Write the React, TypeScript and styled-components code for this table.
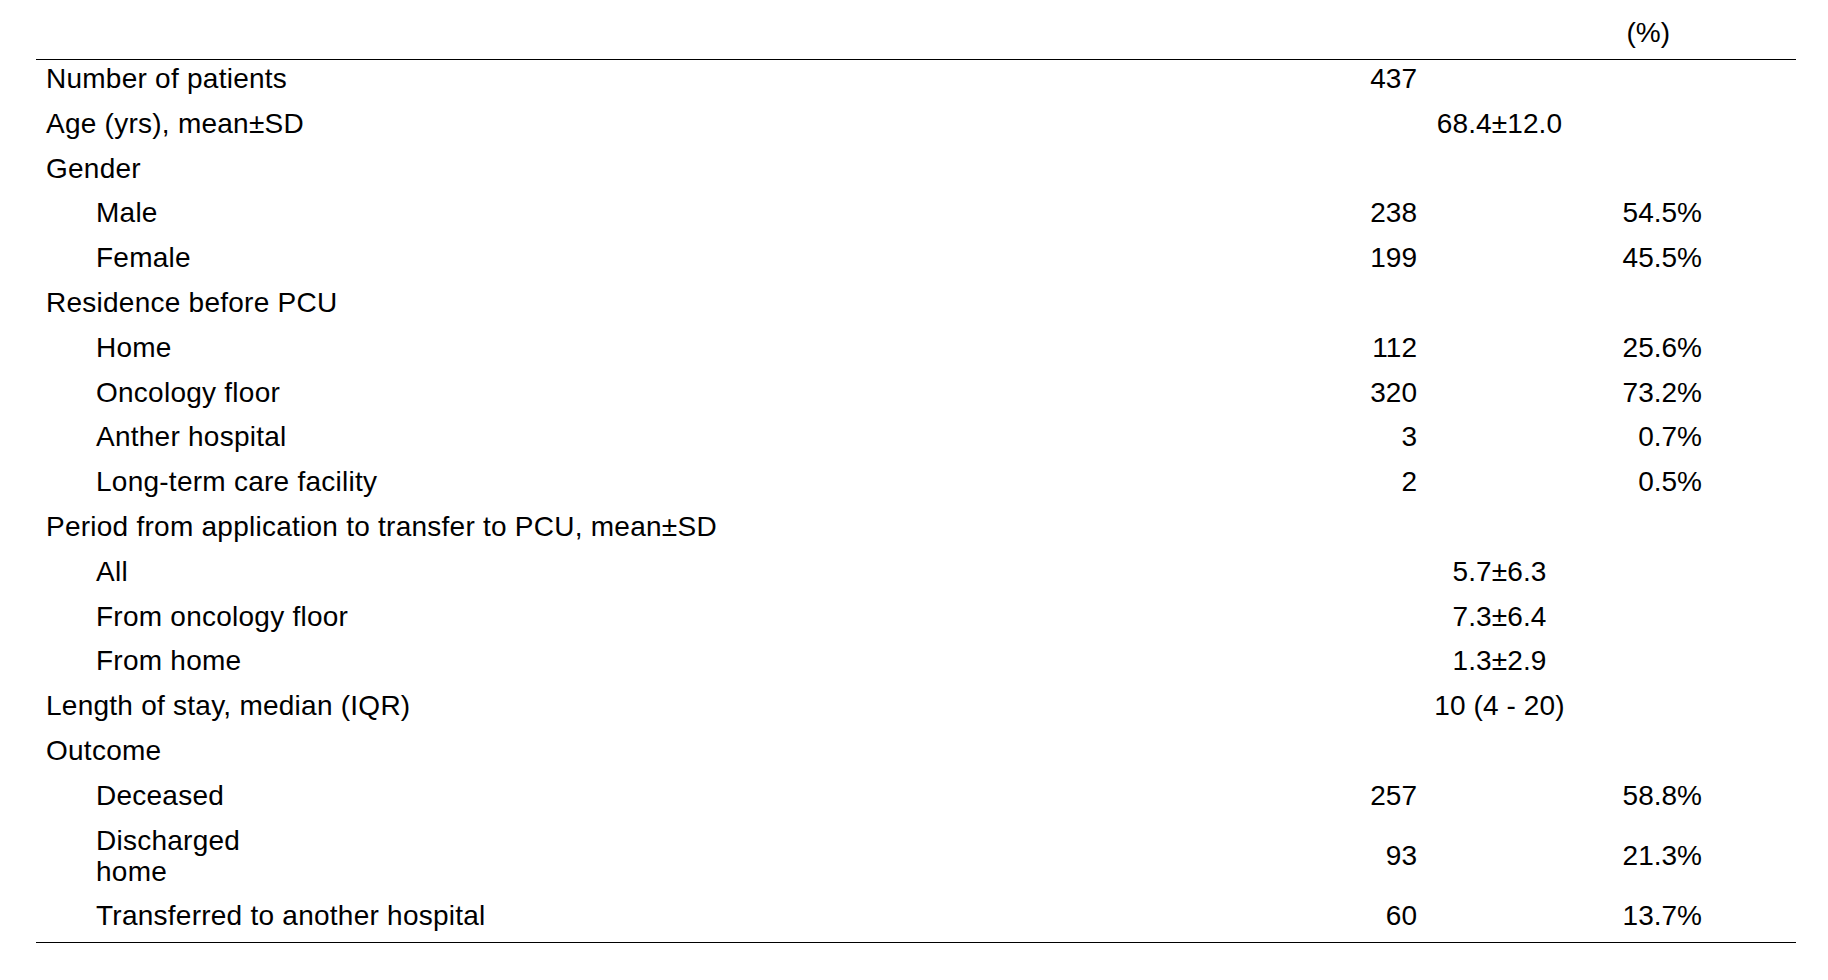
import React from "react";
import styled, { createGlobalStyle } from "styled-components";

const GlobalStyle = createGlobalStyle`
  html, body {
    margin: 0;
    padding: 0;
    background: #ffffff;
  }
  body {
    font-family: "Liberation Sans", Arial, Helvetica, sans-serif;
    color: #000000;
  }
`;

const Page = styled.div`
  width: 1828px;
  min-height: 980px;
  box-sizing: border-box;
  padding-left: 36px;
  background: #ffffff;
`;

const Table = styled.div`
  width: 1760px;
  display: flex;
  flex-direction: column;
  font-size: 28px;
  line-height: 31px;
  color: #000;
`;

const GRID = "1261px 120px 165px 120px 94px";

const HeaderRow = styled.div`
  display: grid;
  grid-template-columns: ${GRID};
  padding: 17px 0 11px;
  border-bottom: 1px solid #000;
`;

const HeadCell = styled.div`
  grid-column: 4;
  text-align: right;
  padding-right: 32px;
  white-space: nowrap;
`;

const Body = styled.div`
  display: flex;
  flex-direction: column;
  border-bottom: 1px solid #000;
`;

const Row = styled.div`
  display: grid;
  grid-template-columns: ${GRID};
  align-items: center;
  padding: 3px 0 10.8px;
`;

const LabelCell = styled.div<{ $sub?: boolean }>`
  grid-column: 1;
  padding-left: ${(p) => (p.$sub ? "60px" : "10px")};
  letter-spacing: 0.25px;
  white-space: nowrap;
`;

const CountCell = styled.div`
  grid-column: 2;
  text-align: right;
  white-space: nowrap;
`;

const StatCell = styled.div`
  grid-column: 3;
  text-align: center;
  letter-spacing: 0.1px;
  white-space: nowrap;
`;

const PctCell = styled.div`
  grid-column: 4;
  text-align: right;
  white-space: nowrap;
`;

type Item = {
  label: React.ReactNode;
  sub?: boolean;
  n?: string;
  stat?: string;
  pct?: string;
};

const rows: Item[] = [
  { label: "Number of patients", n: "437" },
  { label: "Age (yrs), mean±SD", stat: "68.4±12.0" },
  { label: "Gender" },
  { label: "Male", sub: true, n: "238", pct: "54.5%" },
  { label: "Female", sub: true, n: "199", pct: "45.5%" },
  { label: "Residence before PCU" },
  { label: "Home", sub: true, n: "112", pct: "25.6%" },
  { label: "Oncology floor", sub: true, n: "320", pct: "73.2%" },
  { label: "Anther hospital", sub: true, n: "3", pct: "0.7%" },
  { label: "Long-term care facility", sub: true, n: "2", pct: "0.5%" },
  { label: "Period from application to transfer to PCU, mean±SD" },
  { label: "All", sub: true, stat: "5.7±6.3" },
  { label: "From oncology floor", sub: true, stat: "7.3±6.4" },
  { label: "From home", sub: true, stat: "1.3±2.9" },
  { label: "Length of stay, median (IQR)", stat: "10 (4 - 20)" },
  { label: "Outcome" },
  { label: "Deceased", sub: true, n: "257", pct: "58.8%" },
  {
    label: (
      <>
        Discharged
        <br />
        home
      </>
    ),
    sub: true,
    n: "93",
    pct: "21.3%",
  },
  { label: "Transferred to another hospital", sub: true, n: "60", pct: "13.7%" },
];

export default function App() {
  return (
    <>
      <GlobalStyle />
      <Page>
        <Table>
          <HeaderRow>
            <HeadCell>(%)</HeadCell>
          </HeaderRow>
          <Body>
            {rows.map((r, i) => (
              <Row key={i}>
                <LabelCell $sub={r.sub}>{r.label}</LabelCell>
                {r.n && <CountCell>{r.n}</CountCell>}
                {r.stat && <StatCell>{r.stat}</StatCell>}
                {r.pct && <PctCell>{r.pct}</PctCell>}
              </Row>
            ))}
          </Body>
        </Table>
      </Page>
    </>
  );
}
